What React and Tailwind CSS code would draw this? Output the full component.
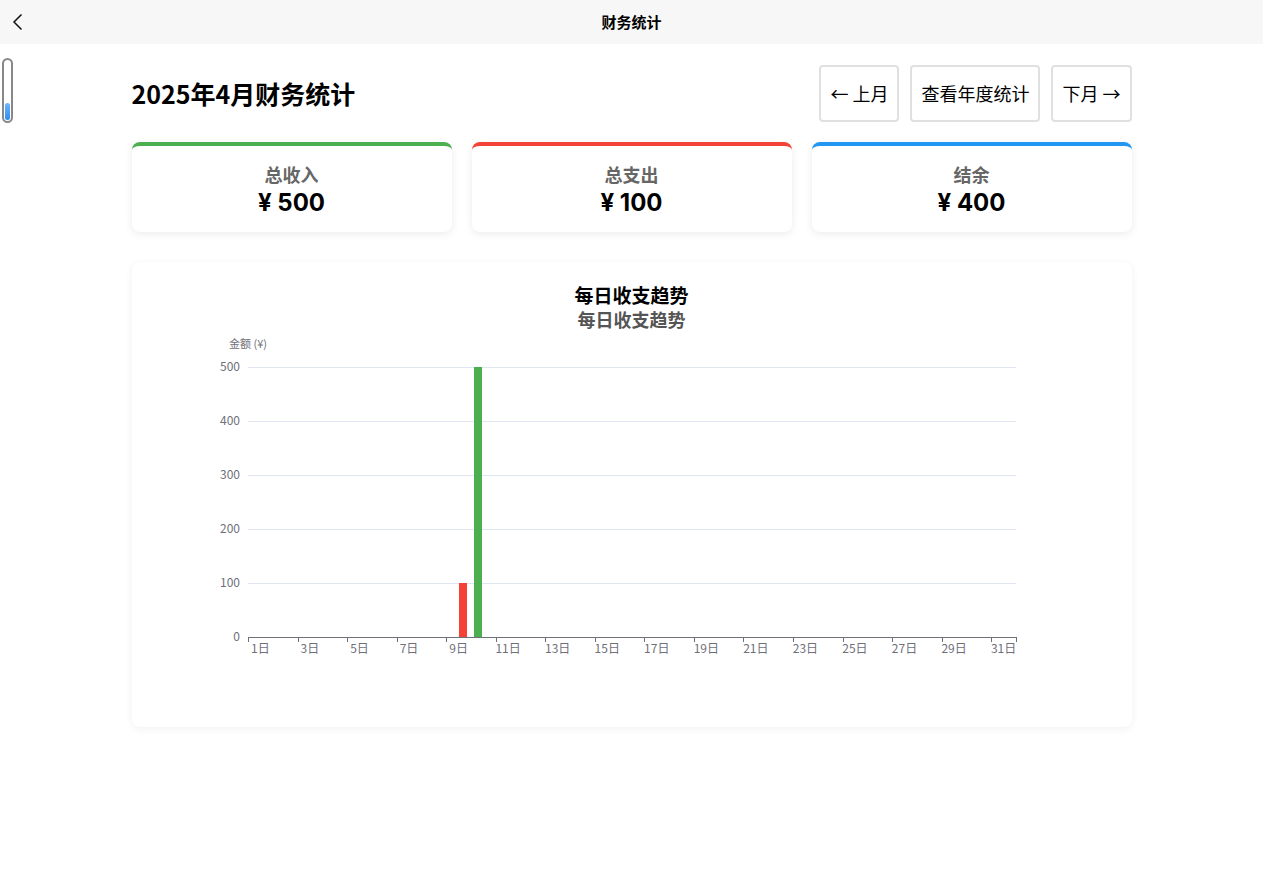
import React from "react";

const font = { fontFamily: '"Noto Sans CJK SC", "Noto Sans", sans-serif' };
const numFont = { fontFamily: 'Inter, "Noto Sans CJK SC", sans-serif' };

function Chart() {
  const x0 = 116;
  const x1 = 884;
  const cat = (x1 - x0) / 31;
  const yLines = [
    { v: 500, y: 32 },
    { v: 400, y: 86 },
    { v: 300, y: 140 },
    { v: 200, y: 194 },
    { v: 100, y: 248 },
  ];
  const ticks = [];
  for (let k = 0; k <= 15; k++) ticks.push(x0 + k * cat * 2);
  ticks.push(x1);
  const labels = [];
  for (let d = 1; d <= 31; d += 2) labels.push(d);
  return (
    <svg width="1000" height="360" className="block" style={font}>
      <text x="116" y="13" fontSize="11" fill="#6e7079" textAnchor="middle">
        金额 (¥)
      </text>
      {yLines.map((l) => (
        <g key={l.v}>
          <line x1={x0} x2={x1} y1={l.y + 0.5} y2={l.y + 0.5} stroke="#e0e6f1" strokeWidth="1" />
          <text x="108" y={l.y + 4} fontSize="12" fill="#6e7079" textAnchor="end">
            {l.v}
          </text>
        </g>
      ))}
      <text x="108" y="306" fontSize="12" fill="#6e7079" textAnchor="end">
        0
      </text>
      <rect x="327" y="248" width="8" height="54" fill="#f44336" />
      <rect x="342" y="32" width="8" height="270" fill="#4caf50" />
      <line x1={x0} x2={x1} y1="302.5" y2="302.5" stroke="#6e7079" strokeWidth="1" />
      {ticks.map((t, i) => (
        <line key={i} x1={Math.round(t) + 0.5} x2={Math.round(t) + 0.5} y1="302" y2="307" stroke="#6e7079" strokeWidth="1" />
      ))}
      {labels.map((d) => (
        <text key={d} x={x0 + (d - 0.5) * cat} y="318" fontSize="12" fill="#6e7079" textAnchor="middle">
          {d}日
        </text>
      ))}
    </svg>
  );
}

function Card({ color, label, value }) {
  return (
    <div
      className="h-[90px] bg-white rounded-lg border-t-4 flex flex-col items-center pt-[15px] shadow-[0_2px_8px_rgba(0,0,0,0.08)]"
      style={{ borderTopColor: color }}
    >
      <div className="text-[18px] leading-[26px] font-bold text-[#666]">{label}</div>
      <div className="text-[24px] leading-[29px] font-bold text-black mt-[1px]" style={numFont}>
        {value}
      </div>
    </div>
  );
}

export default function App() {
  return (
    <div className="min-h-[879px] bg-white relative" style={font}>
      <div className="h-[44px] bg-[#f7f7f7] flex items-center justify-center relative">
        <svg className="absolute left-[11px] top-[13px]" width="14" height="18" viewBox="0 0 14 18">
          <path d="M10.5 1.5 L3 9 L10.5 16.5" fill="none" stroke="#111" strokeWidth="1.5" />
        </svg>
        <div className="text-[15px] font-bold text-black">财务统计</div>
      </div>

      <div className="absolute left-[2px] top-[58px] w-[11px] h-[65px] rounded-full border-2 border-[#888] bg-white p-[1px] flex flex-col justify-end">
        <div className="h-[17px] w-full rounded-full bg-gradient-to-b from-[#6fb6ff] to-[#2d8cf0]" />
      </div>

      <div className="w-[1000px] mx-auto pt-[21px]">
        <div className="flex items-center justify-between h-[57px]">
          <h1 className="text-[25px] font-bold text-black">2025年4月财务统计</h1>
          <div className="flex gap-[11px] h-full">
            {["← 上月", "查看年度统计", "下月 →"].map((t) => (
              <button
                key={t}
                className="h-full px-[9px] border-2 border-[#e0e0e0] rounded bg-white text-[18px] text-black"
                style={font}
              >
                {t}
              </button>
            ))}
          </div>
        </div>

        <div className="grid grid-cols-3 gap-5 mt-[20px]">
          <Card color="#4caf50" label="总收入" value="¥ 500" />
          <Card color="#f44336" label="总支出" value="¥ 100" />
          <Card color="#2196f3" label="结余" value="¥ 400" />
        </div>

        <div className="mt-[30px] h-[465px] bg-white rounded-lg shadow-[0_2px_8px_rgba(0,0,0,0.06)] flex flex-col">
          <div className="pt-[21px] flex flex-col items-center">
            <div className="text-[19px] leading-[24px] font-bold text-black">每日收支趋势</div>
            <div className="text-[18px] leading-[25px] font-bold text-[#555]">每日收支趋势</div>
          </div>
          <div className="mt-[3px]">
            <Chart />
          </div>
        </div>
      </div>
    </div>
  );
}
